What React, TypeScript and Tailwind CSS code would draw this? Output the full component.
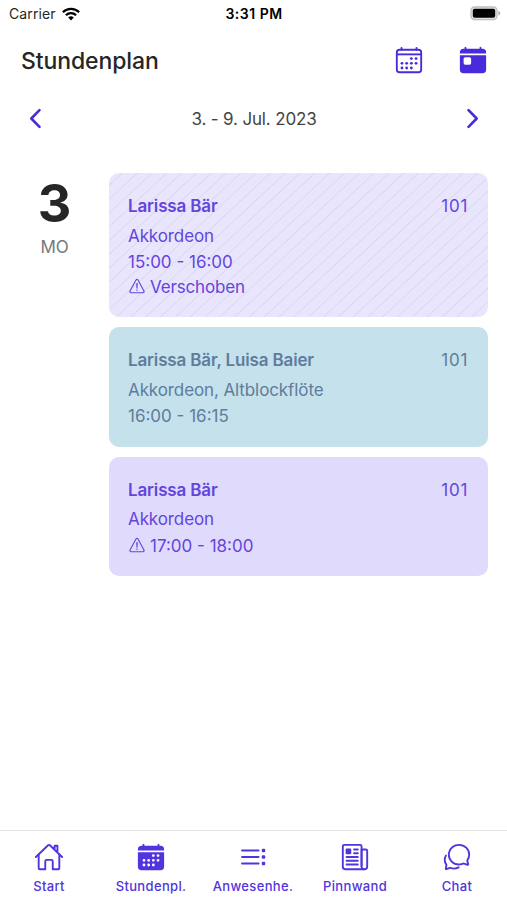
import type { ReactNode } from "react";
import {
  IoCalendar,
  IoCalendarOutline,
  IoChatbubblesOutline,
  IoHomeOutline,
  IoNewspaperOutline,
  IoToday,
  IoWarningOutline,
} from "react-icons/io5";

function Wifi() {
  return (
    <svg width="18" height="14" viewBox="0 0 18 14" fill="none" stroke="#000" strokeWidth="2.3">
      <path d="M0.9 5.2a11.6 11.6 0 0 1 16.2 0" />
      <path d="M3.9 8.2a7.3 7.3 0 0 1 10.2 0" />
      <path d="M9 13.4 6.2 10.5a4 4 0 0 1 5.6 0z" fill="#000" stroke="none" />
    </svg>
  );
}

function Battery() {
  return (
    <svg width="31" height="15" viewBox="0 0 31 15">
      <rect x="1" y="1" width="26" height="12.6" rx="3.6" fill="#e4e4e4" stroke="#bdbdbd" strokeWidth="1.3" />
      <rect x="2.8" y="2.8" width="22.4" height="9" rx="1.8" fill="#000" />
      <path d="M28.4 5v4.6c1.1-.3 1.9-1.2 1.9-2.3S29.5 5.3 28.4 5z" fill="#b0b0b0" />
    </svg>
  );
}

function Chevron({ flip = false }: { flip?: boolean }) {
  return (
    <svg
      width="14"
      height="22"
      viewBox="0 0 14 22"
      fill="none"
      stroke="#4a2bdc"
      strokeWidth="2.6"
      strokeLinecap="round"
      strokeLinejoin="round"
      className={flip ? "-scale-x-100" : ""}
    >
      <path d="M11.5 2.2 3.3 10.5l8.2 8.3" />
    </svg>
  );
}

function AttendanceIcon() {
  return (
    <svg width="26" height="26" viewBox="0 0 26 26" fill="none" stroke="currentColor" strokeWidth="1.9" strokeLinecap="round">
      <path d="M2 6.5h16.6M2 13h16.6M2 19.5h16.6" />
      <g fill="currentColor" stroke="none">
        <rect x="21.8" y="4.8" width="3.4" height="3.4" rx="1" />
        <rect x="21.8" y="11.3" width="3.4" height="3.4" rx="1" />
        <rect x="21.8" y="17.8" width="3.4" height="3.4" rx="1" />
      </g>
    </svg>
  );
}

type LessonProps = {
  className: string;
  names: string;
  subject: string;
  room: string;
  children: ReactNode;
};

function Lesson({ className, names, subject, room, children }: LessonProps) {
  return (
    <article className={`flex justify-between rounded-[10px] pl-[19px] pr-5 pt-5 text-[17px] leading-[26.5px] ${className}`}>
      <div>
        <h2 className="mb-[3px] font-semibold tracking-[-0.15px]">{names}</h2>
        <p className="tracking-[-0.1px]">{subject}</p>
        {children}
      </div>
      <span className="tracking-[0.7px]">{room}</span>
    </article>
  );
}

const tabs = [
  { label: "Start", icon: <IoHomeOutline size={30} /> },
  { label: "Stundenpl.", icon: <IoCalendar size={30} /> },
  { label: "Anwesenhe.", icon: <AttendanceIcon /> },
  { label: "Pinnwand", icon: <IoNewspaperOutline size={30} /> },
  { label: "Chat", icon: <IoChatbubblesOutline size={30} /> },
];

export default function App() {
  return (
    <div className="flex h-[900px] w-[507px] flex-col overflow-hidden bg-white font-['Inter','Liberation_Sans',sans-serif] text-[#262626]">
      <div className="grid h-[27px] grid-cols-3 items-center pl-[9px] pr-[6px] text-[14px]">
        <span className="flex items-center gap-[6px] tracking-[0.1px]">
          Carrier
          <Wifi />
        </span>
        <span className="pr-[2px] text-center text-[14px] font-semibold tracking-[0.5px] text-black">3:31 PM</span>
        <span className="flex justify-end">
          <Battery />
        </span>
      </div>

      <header className="flex h-[66px] items-center justify-between pl-[21px] pr-[19px]">
        <h1 className="pt-[2px] text-[23px] font-medium tracking-[-0.1px]">Stundenplan</h1>
        <div className="flex gap-[34px] text-[#4a2bdc]">
          <IoCalendarOutline size={30} />
          <IoToday size={30} />
        </div>
      </header>

      <div className="flex h-[51px] items-center justify-between pl-[28px] pr-[27px]">
        <Chevron />
        <span className="pt-[3px] text-[17px] tracking-[-0.15px] text-[#444]">3. - 9. Jul. 2023</span>
        <Chevron flip />
      </div>

      <main className="flex grow pt-[29.4px]">
        <div className="flex w-[109px] flex-col items-center pt-[6px]">
          <span className="text-[52px] font-bold leading-[50px]">3</span>
          <span className="mt-[5px] text-[17px] leading-[26px] tracking-[-0.3px] text-[#777]">MO</span>
        </div>
        <div className="flex w-[379px] flex-col gap-[10px]">
          <Lesson
            className="h-[144px] bg-[#e9e5fd] bg-[repeating-linear-gradient(137deg,transparent_0,transparent_8.2px,#dedaf1_8.9px,#dedaf1_9.4px,transparent_10.1px)] text-[#6345dc]"
            names="Larissa Bär"
            subject="Akkordeon"
            room="101"
          >
            <p>15:00 - 16:00</p>
            <p className="-mt-[2px] flex items-center gap-[4px] tracking-[-0.15px]">
              <IoWarningOutline size={18} className="mb-[2px]" />
              Verschoben
            </p>
          </Lesson>
          <Lesson className="h-[119.4px] bg-[#c5e1ec] text-[#5f7c9c]" names="Larissa Bär, Luisa Baier" subject="Akkordeon, Altblockflöte" room="101">
            <p>16:00 - 16:15</p>
          </Lesson>
          <Lesson className="h-[119.4px] bg-[#e0dbfc] text-[#6345dc]" names="Larissa Bär" subject="Akkordeon" room="101">
            <p className="flex items-center gap-[4px]">
              <IoWarningOutline size={18} className="mb-[2px]" />
              17:00 - 18:00
            </p>
          </Lesson>
        </div>
      </main>

      <nav className="flex h-[70px] justify-center border-t border-[#e6e6e6] pr-[1px] text-[#5134de]">
        {tabs.map((tab) => (
          <div key={tab.label} className="flex w-[102px] shrink-0 flex-col items-center pt-[11px]">
            <span className="flex h-[30px] items-center">{tab.icon}</span>
            <span className="mt-[5px] text-[13px] font-medium leading-[18px] tracking-[0.35px]">{tab.label}</span>
          </div>
        ))}
      </nav>
    </div>
  );
}
